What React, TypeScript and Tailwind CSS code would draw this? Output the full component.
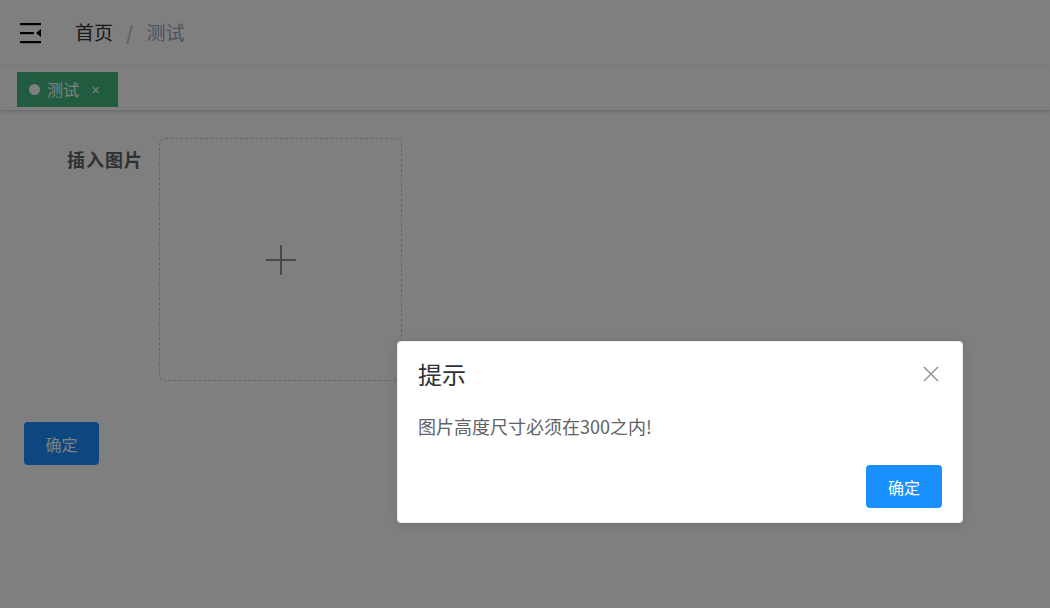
import React from "react";

const font = { fontFamily: '"Noto Sans CJK SC", "Noto Sans", sans-serif' };

const Hamburger = () => (
    <svg width="22" height="22" viewBox="0 0 22 22" fill="#000">
        <rect x="0" y="1" width="21" height="2.2" />
        <rect x="0" y="10" width="14" height="2.2" />
        <polygon points="21,7 21,15 16,11" />
        <rect x="0" y="19" width="21" height="2.2" />
    </svg>
);

const App = () => {
    return (
        <div className="relative w-[1050px] h-[608px] bg-white overflow-hidden" style={font}>
            {/* navbar */}
            <div className="h-[66px] flex items-center shadow-[0_1px_4px_rgba(0,21,41,0.08)] relative z-10">
                <div className="pl-[20px] pr-[33px] flex items-center">
                    <Hamburger />
                </div>
                <div className="flex items-center text-[19px] leading-[24px] -mt-[2px]">
                    <span className="text-[#303133]">首页</span>
                    <span className="mx-[13px] text-[#c0c4cc] font-bold">/</span>
                    <span className="text-[#97a8be]">测试</span>
                </div>
            </div>
            {/* tags view */}
            <div className="h-[45px] border-b border-[#d8dce5] shadow-[0_1px_3px_0_rgba(0,0,0,0.12),0_0_3px_0_rgba(0,0,0,0.04)] flex items-center pl-[17px] pt-[2px]">
                <div className="h-[35px] w-[101px] bg-[#42b983] text-white flex items-center pl-[12px] text-[16px]">
                    <span className="w-[11px] h-[11px] rounded-full bg-white mr-[7px]" />
                    <span>测试</span>
                    <span className="ml-[12px] text-[11px]">✕</span>
                </div>
            </div>
            {/* form */}
            <div className="pt-[27px] pl-[24px]">
                <div className="flex">
                    <div className="w-[135px] text-right pr-[16px] pt-[9px] text-[18px] tracking-[1px] font-bold text-[#606266] leading-[24px]">
                        插入图片
                    </div>
                    <div className="w-[243px] h-[243px] border border-dashed border-[#c0ccda] rounded-[6px] flex items-center justify-center">
                        <svg width="32" height="32" viewBox="0 0 32 32" stroke="#8c939d" strokeWidth="2">
                            <line x1="16" y1="1" x2="16" y2="31" />
                            <line x1="1" y1="16" x2="31" y2="16" />
                        </svg>
                    </div>
                </div>
                <button className="mt-[41px] w-[75px] h-[43px] rounded-[4px] bg-[#1890ff] text-white text-[16px]">
                    确定
                </button>
            </div>
            {/* overlay */}
            <div className="absolute inset-0 bg-black/50 z-20" />
            {/* message box */}
            <div className="absolute left-[397px] top-[341px] w-[566px] h-[182px] bg-white rounded-[4px] border border-[#ebeef5] shadow-[0_2px_12px_0_rgba(0,0,0,0.1)] z-30">
                <div className="flex items-center justify-between pl-[20px] pr-[23px] pt-[16px]">
                    <span className="text-[24px] text-[#303133] leading-[32px]">提示</span>
                    <svg width="16" height="16" viewBox="0 0 16 16" stroke="#909399" strokeWidth="1.5">
                        <line x1="1" y1="1" x2="15" y2="15" />
                        <line x1="15" y1="1" x2="1" y2="15" />
                    </svg>
                </div>
                <div className="pl-[20px] pt-[23px] text-[18px] text-[#606266] leading-[26px]">
                    图片高度尺寸必须在300之内!
                </div>
                <div className="flex justify-end pr-[20px] pt-[26px]">
                    <button className="w-[76px] h-[43px] rounded-[4px] bg-[#1890ff] text-white text-[16px]">
                        确定
                    </button>
                </div>
            </div>
        </div>
    );
};

export default App;
